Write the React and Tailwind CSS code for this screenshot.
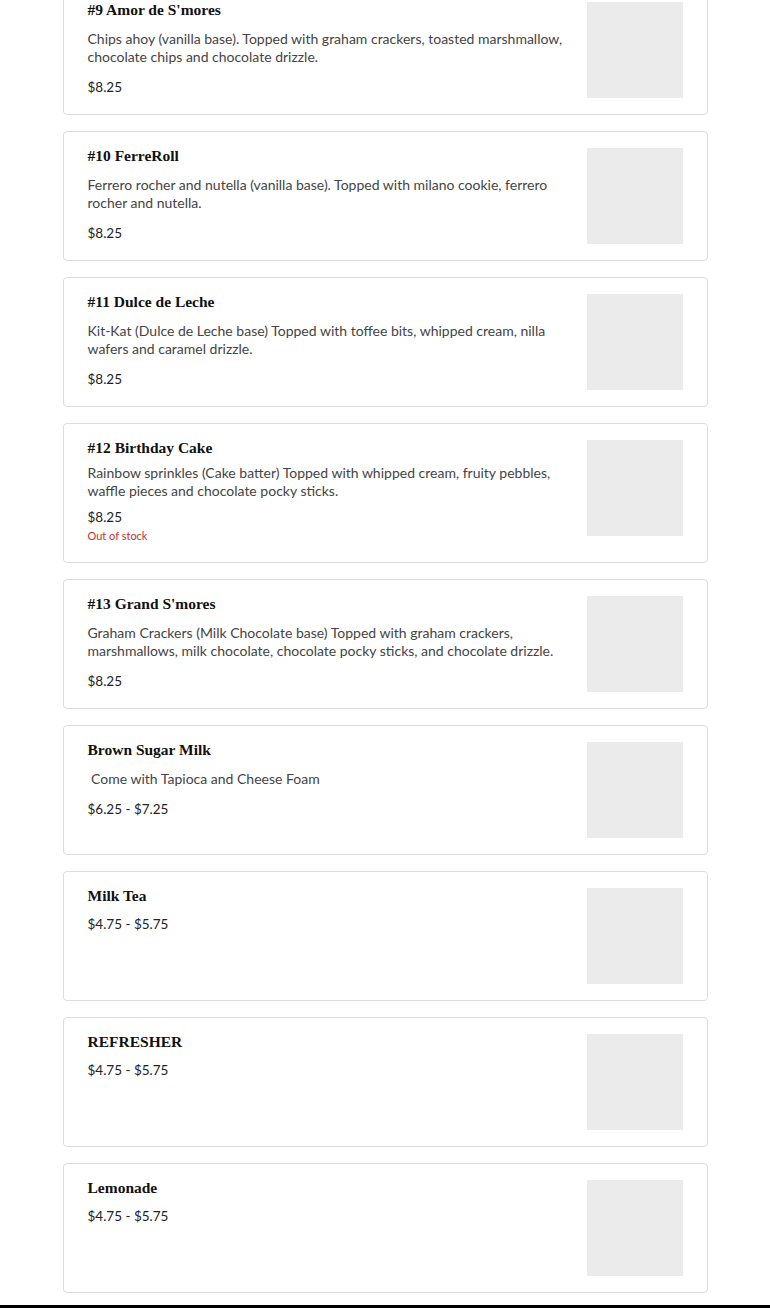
import React from 'react';

const ITEMS = [
  {
    title: "#9 Amor de S'mores",
    lines: ['Chips ahoy (vanilla base). Topped with graham crackers, toasted marshmallow,', 'chocolate chips and chocolate drizzle.'],
    price: '$8.25',
  },
  {
    title: '#10 FerreRoll',
    lines: ['Ferrero rocher and nutella (vanilla base). Topped with milano cookie, ferrero', 'rocher and nutella.'],
    price: '$8.25',
  },
  {
    title: '#11 Dulce de Leche',
    lines: ['Kit-Kat (Dulce de Leche base) Topped with toffee bits, whipped cream, nilla', 'wafers and caramel drizzle.'],
    price: '$8.25',
  },
  {
    title: '#12 Birthday Cake',
    lines: ['Rainbow sprinkles (Cake batter) Topped with whipped cream, fruity pebbles,', 'waffle pieces and chocolate pocky sticks.'],
    price: '$8.25',
    soldOut: true,
  },
  {
    title: "#13 Grand S'mores",
    lines: ['Graham Crackers (Milk Chocolate base) Topped with graham crackers,', 'marshmallows, milk chocolate, chocolate pocky sticks, and chocolate drizzle.'],
    price: '$8.25',
  },
  {
    title: 'Brown Sugar Milk',
    lines: ['\u00a0Come with Tapioca and Cheese Foam'],
    price: '$6.25 - $7.25',
  },
  { title: 'Milk Tea', lines: [], price: '$4.75 - $5.75' },
  { title: 'REFRESHER', lines: [], price: '$4.75 - $5.75' },
  { title: 'Lemonade', lines: [], price: '$4.75 - $5.75' },
];

const serif = { fontFamily: '"Liberation Serif", "DejaVu Serif", serif' };

function MenuCard({ item }) {
  const hasDesc = item.lines.length > 0;
  return (
    <div className="flex min-h-[130px] justify-between rounded-[4px] border border-[#dcdcdc] bg-white px-[24px] py-[16px]">
      <div className="flex min-w-0 flex-col">
        <div className="text-[15.5px] font-bold leading-[16px] text-[#111]" style={serif}>
          {item.title}
        </div>
        {hasDesc && (
          <p className={`${item.soldOut ? 'mt-[8px]' : 'mt-[12px]'} whitespace-pre text-[14px] leading-[18px] text-[#444]`}>
            {item.lines.map((l, i) => (
              <React.Fragment key={i}>
                {l}
                {i < item.lines.length - 1 && <br />}
              </React.Fragment>
            ))}
          </p>
        )}
        <div
          className={`${
            item.soldOut ? 'mt-[8px] leading-[18px]' : hasDesc ? 'mt-[11px] leading-[20px]' : 'mt-[10px] leading-[20px]'
          } text-[13.5px] text-[#222]`}
        >
          {item.price}
        </div>
        {item.soldOut && <div className="text-[11px] leading-[20px] text-[#c8312b]">Out of stock</div>}
      </div>
      <div className="h-[96px] w-[96px] shrink-0 bg-[#ebebeb]" />
    </div>
  );
}

export default function App() {
  return (
    <div className="min-h-[1308px] bg-white" style={{ fontFamily: 'Lato, "Noto Sans", sans-serif' }}>
      <div className="mx-auto mt-[-15px] flex w-[645px] flex-col gap-[16px]">
        {ITEMS.map((item) => (
          <MenuCard key={item.title} item={item} />
        ))}
      </div>
      <div className="mt-[12px] h-[3px] bg-black" />
    </div>
  );
}
